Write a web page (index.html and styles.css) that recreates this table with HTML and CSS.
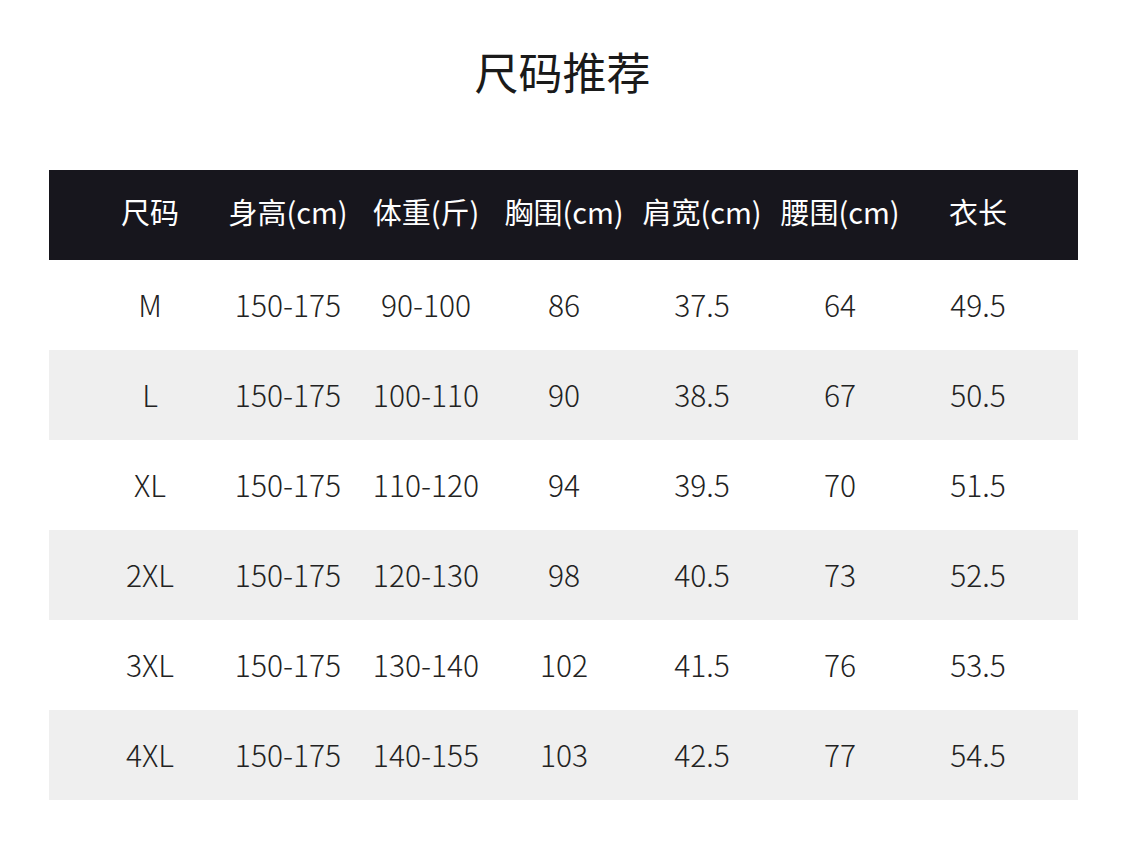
FILE: index.html
```html
<!DOCTYPE html>
<html lang="zh">
<head>
<meta charset="utf-8">
<link rel="stylesheet" href="styles.css">
</head>
<body>
<div class="page">
  <h1 class="title">尺码推荐</h1>
  <div class="table">
    <div class="row head">
      <div>尺码</div><div>身高(cm)</div><div>体重(斤)</div><div>胸围(cm)</div><div>肩宽(cm)</div><div>腰围(cm)</div><div>衣长</div>
    </div>
    <div class="row">
      <div>M</div><div>150-175</div><div>90-100</div><div>86</div><div>37.5</div><div>64</div><div>49.5</div>
    </div>
    <div class="row alt">
      <div>L</div><div>150-175</div><div>100-110</div><div>90</div><div>38.5</div><div>67</div><div>50.5</div>
    </div>
    <div class="row">
      <div>XL</div><div>150-175</div><div>110-120</div><div>94</div><div>39.5</div><div>70</div><div>51.5</div>
    </div>
    <div class="row alt">
      <div>2XL</div><div>150-175</div><div>120-130</div><div>98</div><div>40.5</div><div>73</div><div>52.5</div>
    </div>
    <div class="row">
      <div>3XL</div><div>150-175</div><div>130-140</div><div>102</div><div>41.5</div><div>76</div><div>53.5</div>
    </div>
    <div class="row alt">
      <div>4XL</div><div>150-175</div><div>140-155</div><div>103</div><div>42.5</div><div>77</div><div>54.5</div>
    </div>
  </div>
</div>
</body>
</html>
```
FILE: styles.css
```css
html, body {
  margin: 0;
  padding: 0;
  background: #ffffff;
}
body {
  font-family: "Noto Sans CJK SC", "Noto Sans", sans-serif;
  color: #222222;
}
.page {
  width: 1125px;
  height: 846px;
  padding-top: 42px;
  box-sizing: border-box;
}
.title {
  margin: 0;
  height: 58px;
  line-height: 58px;
  text-align: center;
  font-size: 44px;
  font-weight: 400;
  color: #1a1a1a;
}
.table {
  margin: 70px 0 0 49px;
  width: 1029px;
}
.row {
  display: grid;
  grid-template-columns: repeat(7, 138px);
  padding: 0 31px 0 32px;
  height: 90px;
  align-items: center;
  font-size: 30px;
  font-weight: 300;
}
.row > div {
  text-align: center;
  white-space: nowrap;
}
.row:not(.head) > div {
  padding-bottom: 2px;
}
.head {
  background: #17161d;
  color: #ffffff;
  font-size: 29px;
  font-weight: 400;
}
.head > div {
  padding-bottom: 8px;
}
.alt {
  background: #efefef;
}
```
